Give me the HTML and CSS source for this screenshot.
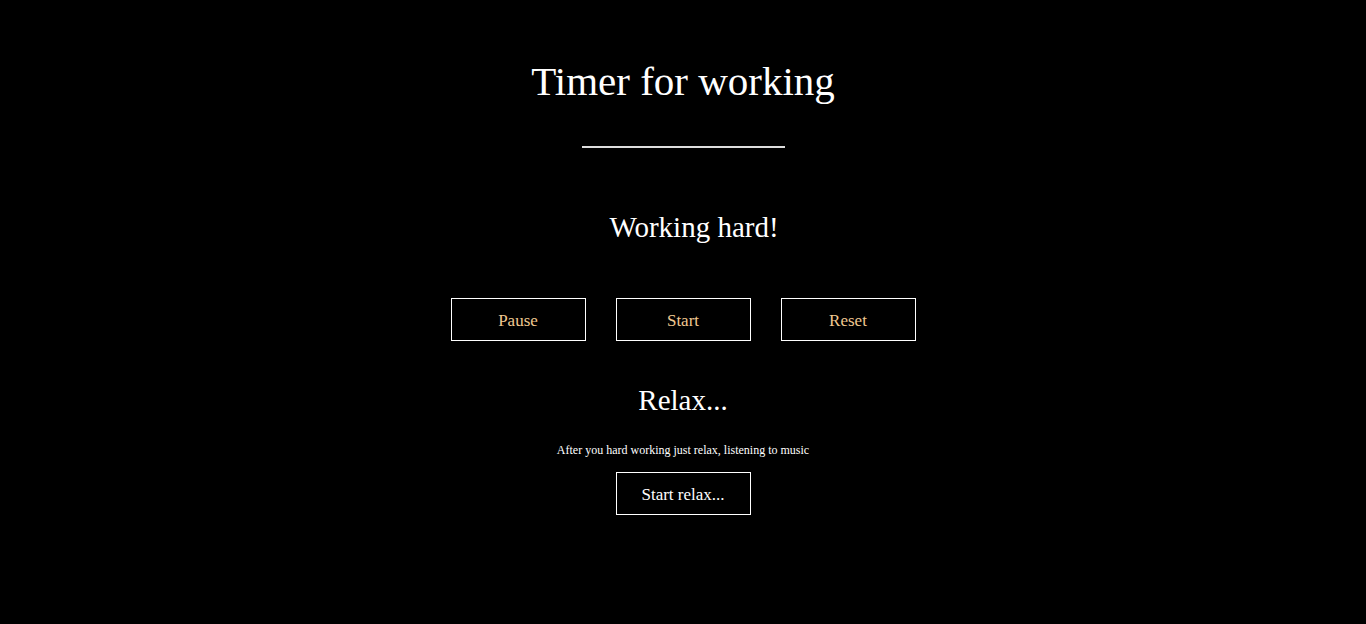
FILE: index.html
```html
<!DOCTYPE html>
<html>
<head>
<meta charset="utf-8">
<link rel="stylesheet" href="styles.css">
</head>
<body>
<main class="page">
  <h1 class="title">Timer for working</h1>
  <div class="divider"></div>
  <h2 class="status">Working hard!</h2>
  <div class="controls">
    <button class="btn btn-gold">Pause</button>
    <button class="btn btn-gold">Start</button>
    <button class="btn btn-gold">Reset</button>
  </div>
  <h2 class="relax-title">Relax...</h2>
  <p class="relax-text">After you hard working just relax, listening to music</p>
  <button class="btn btn-white">Start relax...</button>
</main>
</body>
</html>
```
FILE: styles.css
```css
html, body {
  margin: 0;
  padding: 0;
  background: #000;
  color: #fff;
  font-family: "Liberation Serif", "DejaVu Serif", serif;
}
.page {
  display: flex;
  flex-direction: column;
  align-items: center;
  padding-top: 56px;
}
.title {
  margin: 0;
  font-weight: normal;
  font-size: 41px;
  line-height: 50px;
}
.divider {
  width: 203px;
  height: 2px;
  background: #ddd;
  margin-top: 40px;
}
.status {
  margin: 62px 0 0;
  padding-left: 22px;
  font-weight: normal;
  font-size: 29px;
  line-height: 34px;
}
.controls {
  display: flex;
  gap: 30px;
  margin-top: 54px;
}
.btn {
  width: 135px;
  height: 43px;
  background: #000;
  border: 1px solid #fff;
  font-family: inherit;
  font-size: 17px;
  padding: 2px 0 0;
}
.btn-gold { color: #f0c890; }
.btn-white { color: #fff; }
.relax-title {
  margin: 42px 0 0;
  font-weight: normal;
  font-size: 29px;
  line-height: 34px;
}
.relax-text {
  margin: 26px 0 0;
  font-size: 12px;
  line-height: 14px;
}
.relax-text + .btn { margin-top: 15px; }
```
